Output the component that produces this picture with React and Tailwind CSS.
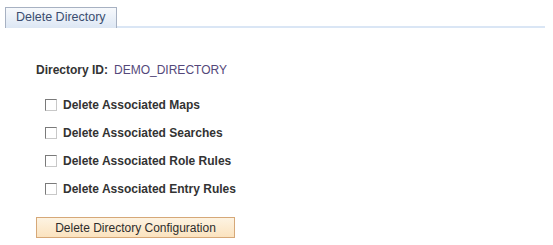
import React, { useState } from "react";

const opciones = [
  "Delete Associated Maps",
  "Delete Associated Searches",
  "Delete Associated Role Rules",
  "Delete Associated Entry Rules",
];

export default function App() {
  const [marcados, setMarcados] = useState({});

  return (
    <div className="w-[553px] h-[245px] bg-white font-['Liberation_Sans',Arial,sans-serif] text-[12px] text-[#333333]">
      {/* pestaña */}
      <div className="pt-[7px] pl-[5px] pr-[8px]">
        <div className="flex items-end border-b-[2px] border-[#dae6f5]">
          <div className="h-[21px] px-[10px] flex items-center border border-b-0 border-[#a7b1c2] bg-gradient-to-b from-[#f7f9fc] to-[#dde7f4] text-[#3b4d70] text-[12.5px] -mb-[2px] pb-[1px]">
            Delete Directory
          </div>
        </div>
      </div>

      <div className="pl-[36px] pt-[34px]">
        <div className="flex items-center gap-[6px] h-[16px]">
          <span className="font-bold">Directory ID:</span>
          <span className="text-[#54487a]">DEMO_DIRECTORY</span>
        </div>

        <div className="pl-[9px] pt-[19px] flex flex-col gap-[12px]">
          {opciones.map((texto, i) => (
            <label key={texto} className="flex items-center h-[16px] cursor-pointer">
              <span
                onClick={() => setMarcados({ ...marcados, [i]: !marcados[i] })}
                className="w-[12px] h-[12px] border border-[#7a7a7a] border-r-[#c8c8c8] border-b-[#c8c8c8] bg-white flex items-center justify-center text-[10px] leading-none"
              >
                {marcados[i] ? "✓" : ""}
              </span>
              <span className="font-bold ml-[6px]">{texto}</span>
            </label>
          ))}
        </div>

        <button
          type="button"
          className="mt-[20px] w-[199px] h-[21px] border border-[#d6a878] bg-gradient-to-b from-[#fdf3e2] to-[#fbe3bf] text-[#2d2d2d] text-[12px] flex items-center justify-center"
        >
          Delete Directory Configuration
        </button>
      </div>
    </div>
  );
}
